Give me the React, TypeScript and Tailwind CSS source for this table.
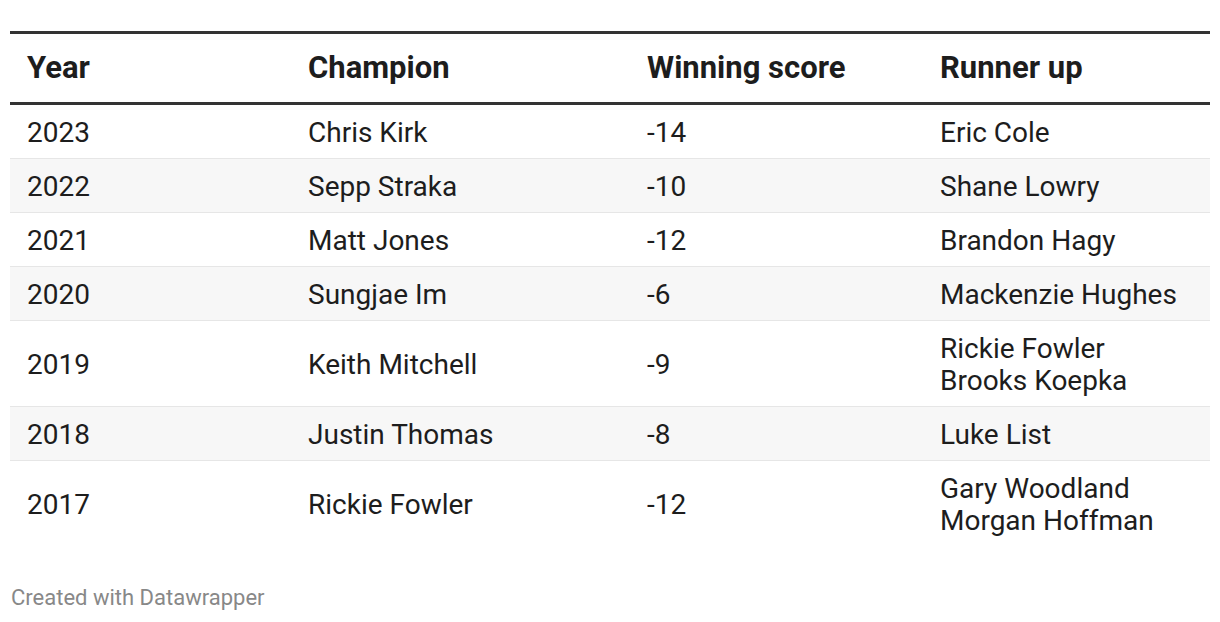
const rows: { year: string; champ: string; score: string; runner: string[] }[] = [
  { year: "2023", champ: "Chris Kirk", score: "-14", runner: ["Eric Cole"] },
  { year: "2022", champ: "Sepp Straka", score: "-10", runner: ["Shane Lowry"] },
  { year: "2021", champ: "Matt Jones", score: "-12", runner: ["Brandon Hagy"] },
  { year: "2020", champ: "Sungjae Im", score: "-6", runner: ["Mackenzie Hughes"] },
  { year: "2019", champ: "Keith Mitchell", score: "-9", runner: ["Rickie Fowler", "Brooks Koepka"] },
  { year: "2018", champ: "Justin Thomas", score: "-8", runner: ["Luke List"] },
  { year: "2017", champ: "Rickie Fowler", score: "-12", runner: ["Gary Woodland", "Morgan Hoffman"] },
];

const cols = "grid grid-cols-[281px_339px_293px_287px]";

export default function App() {
  return (
    <div className="w-[1220px] h-[622px] bg-white font-['Roboto',sans-serif] text-[#1d1d1d]">
      <div className="pt-[31px] px-[10px]">
        <div className="border-t-[3px] border-b-[3px] border-[#333333]">
          <div className={`${cols} h-[68px] items-center text-[31px] leading-[36px] font-bold`}>
            <div className="pl-[17px]">Year</div>
            <div className="pl-[17px]">Champion</div>
            <div className="pl-[17px]">Winning score</div>
            <div className="pl-[17px]">Runner up</div>
          </div>
        </div>
        {rows.map((r, i) => (
          <div
            key={r.year}
            className={`${cols} items-center text-[28px] leading-[32px] pt-[12px] pb-[9px] ${
              i < rows.length - 1 ? "border-b border-[#e6e6e6]" : ""
            } ${i % 2 === 1 ? "bg-[#f7f7f7]" : "bg-white"}`}
          >
            <div className="pl-[17px]">{r.year}</div>
            <div className="pl-[17px]">{r.champ}</div>
            <div className="pl-[17px]">{r.score}</div>
            <div className="pl-[17px]">
              {r.runner.map((n) => (
                <div key={n}>{n}</div>
              ))}
            </div>
          </div>
        ))}
        <div className="mt-[39px] pl-[1px] text-[22px] leading-[26px] text-[#888888]">Created with Datawrapper</div>
      </div>
    </div>
  );
}
